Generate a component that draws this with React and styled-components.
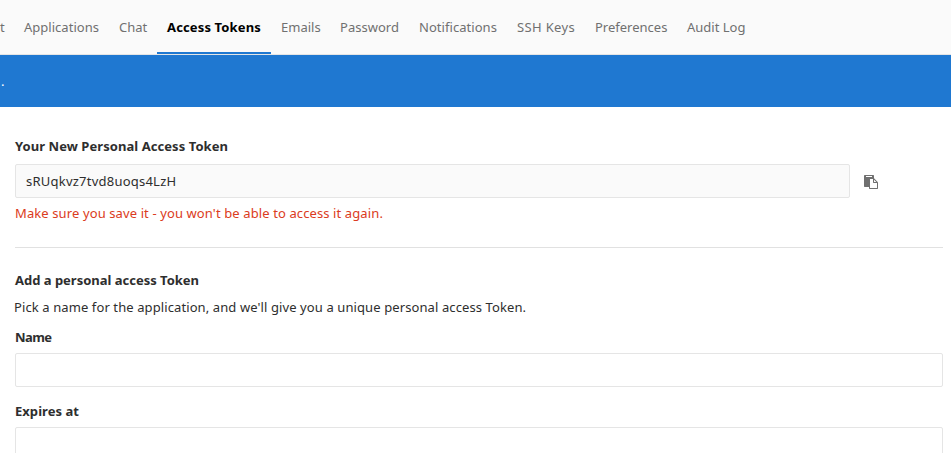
import React from "react";
import styled, { createGlobalStyle } from "styled-components";

const GlobalStyle = createGlobalStyle`
  *, *::before, *::after { box-sizing: border-box; }
  body {
    margin: 0;
    background: #fff;
    overflow: hidden;
    font-family: "Noto Sans", "Open Sans", sans-serif;
    font-size: 13px;
    line-height: 20px;
    color: #2e2e2e;
  }
`;

const Page = styled.div`
  height: 453px;
  overflow: hidden;
`;

const TabBar = styled.nav`
  display: flex;
  height: 55px;
  background: #fafafa;
  border-bottom: 1px solid #e5e5e5;
`;

const Tab = styled.a`
  flex: 0 0 ${(p) => p.$width}px;
  height: 54px;
  padding: 17px 0 0 ${(p) => (p.$clipped ? 0 : 10)}px;
  white-space: nowrap;
  letter-spacing: ${(p) => p.$tracking || 0}px;
  color: ${(p) => (p.$active ? "#000" : "#707070")};
  font-weight: ${(p) => (p.$active ? 700 : 400)};
  border-bottom: 2px solid ${(p) => (p.$active ? "#1f78d1" : "transparent")};
`;

const Flash = styled.div`
  height: 52px;
  padding: 16px 0 0 1px;
  background: #1f78d1;
  color: #fff;
`;

const Content = styled.main`
  display: flex;
  flex-direction: column;
  padding: 29px 8px 0 15px;
`;

const Heading = styled.h5`
  margin: 0 0 ${(p) => p.$gap}px;
  font-size: 13px;
  line-height: 20px;
  font-weight: 700;
  letter-spacing: ${(p) => p.$tracking}px;
`;

const TokenRow = styled.div`
  display: flex;
  align-items: center;
`;

const Input = styled.input`
  display: block;
  width: ${(p) => p.$width || "100%"};
  height: 34px;
  padding: 6px 10px;
  border: 1px solid #e5e5e5;
  border-radius: 2px;
  background: ${(p) => (p.readOnly ? "#fafafa" : "#fff")};
  color: #2e2e2e;
  font: inherit;
  letter-spacing: 0.23px;
  outline: none;
`;

const CopyButton = styled.button`
  display: flex;
  margin: 2px 0 0 14px;
  padding: 0;
  border: 0;
  background: none;
  color: #707070;
`;

const Warning = styled.span`
  margin-top: 5px;
  letter-spacing: 0.11px;
  color: #db3b21;
`;

const Divider = styled.hr`
  width: 100%;
  height: 1px;
  margin: 24px 0 22px;
  border: 0;
  background: #e1e1e1;
`;

const Description = styled.p`
  margin: 0 0 10px -1px;
  letter-spacing: 0.1px;
`;

const Field = styled.div`
  display: flex;
  flex-direction: column;
  margin-bottom: 14px;
`;

const Label = styled.label`
  margin-bottom: 6px;
  font-weight: 700;
  letter-spacing: ${(p) => p.$tracking}px;
`;

const tabs = [
  { label: "t", width: 14, clipped: true },
  { label: "Applications", width: 95, tracking: 0.02 },
  { label: "Chat", width: 48 },
  { label: "Access Tokens", width: 114, tracking: 0.14, active: true },
  { label: "Emails", width: 59 },
  { label: "Password", width: 79, tracking: 0.02 },
  { label: "Notifications", width: 98, tracking: 0.05 },
  { label: "SSH Keys", width: 78, tracking: 0.34 },
  { label: "Preferences", width: 92 },
  { label: "Audit Log", width: 78 },
];

function PasteIcon() {
  return (
    <svg width="14" height="14" viewBox="0 0 1792 1792" fill="currentColor" aria-hidden="true">
      <path d="M768 1664h896v-640h-416q-40 0-68-28t-28-68v-416h-384v1152zm256-1440v-64q0-13-9.5-22.5t-22.5-9.5h-704q-13 0-22.5 9.5t-9.5 22.5v64q0 13 9.5 22.5t22.5 9.5h704q13 0 22.5-9.5t9.5-22.5zm256 672h299l-299-299v299zm512 128v672q0 40-28 68t-68 28h-960q-40 0-68-28t-28-68v-160h-544q-40 0-68-28t-28-68v-1344q0-40 28-68t68-28h1088q40 0 68 28t28 68v328q21 13 36 28l408 408q28 28 48 76t20 88z" />
    </svg>
  );
}

export default function App() {
  return (
    <Page>
      <GlobalStyle />
      <TabBar>
        {tabs.map((t) => (
          <Tab key={t.label} $width={t.width} $tracking={t.tracking} $active={t.active} $clipped={t.clipped}>
            {t.label}
          </Tab>
        ))}
      </TabBar>
      <Flash>.</Flash>
      <Content>
        <Heading $gap={8} $tracking={0.06}>Your New Personal Access Token</Heading>
        <TokenRow>
          <Input $width="835px" readOnly value="sRUqkvz7tvd8uoqs4LzH" />
          <CopyButton aria-label="Copy">
            <PasteIcon />
          </CopyButton>
        </TokenRow>
        <Warning>Make sure you save it - you won't be able to access it again.</Warning>
        <Divider />
        <Heading $gap={7} $tracking={-0.01}>Add a personal access Token</Heading>
        <Description>
          Pick a name for the application, and we'll give you a unique personal access Token.
        </Description>
        <Field>
          <Label $tracking={-0.6}>Name</Label>
          <Input />
        </Field>
        <Field>
          <Label $tracking={0.04}>Expires at</Label>
          <Input />
        </Field>
      </Content>
    </Page>
  );
}
